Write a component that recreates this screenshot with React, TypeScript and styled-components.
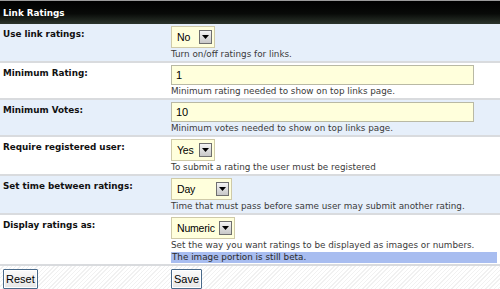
import React from "react";
import styled, { createGlobalStyle } from "styled-components";

const GlobalStyle = createGlobalStyle`
    html, body {
        margin: 0;
        padding: 0;
        background: #ffffff;
    }
    body {
        width: 500px;
        font-family: "DejaVu Sans", Verdana, sans-serif;
    }
`;

type Field = {
    label: string;
    kind: "select" | "text";
    value: string;
    width?: number;
    help: string;
    note?: string;
};

const fields: Field[] = [
    { label: "Use link ratings:", kind: "select", value: "No", width: 44, help: "Turn on/off ratings for links." },
    { label: "Minimum Rating:", kind: "text", value: "1", help: "Minimum rating needed to show on top links page." },
    { label: "Minimum Votes:", kind: "text", value: "10", help: "Minimum votes needed to show on top links page." },
    { label: "Require registered user:", kind: "select", value: "Yes", width: 44, help: "To submit a rating the user must be registered" },
    { label: "Set time between ratings:", kind: "select", value: "Day", width: 61, help: "Time that must pass before same user may submit another rating." },
    {
        label: "Display ratings as:",
        kind: "select",
        value: "Numeric",
        width: 64,
        help: "Set the way you want ratings to be displayed as images or numbers.",
        note: "The image portion is still beta.",
    },
];

const App = () => {
    return (
        <>
            <GlobalStyle />
            <Panel>
                <Header>Link Ratings</Header>
                {fields.map((f, i) => (
                    <Row key={f.label} $alt={i % 2 === 0}>
                        <LabelCell>{f.label}</LabelCell>
                        <ValueCell>
                            {f.kind === "select" ? (
                                <SelectBox $width={f.width || 44}>
                                    <SelectText>{f.value}</SelectText>
                                    <ArrowButton>
                                        <svg width="7" height="4" viewBox="0 0 7 4">
                                            <polygon points="0,0 7,0 3.5,4" fill="#000" />
                                        </svg>
                                    </ArrowButton>
                                </SelectBox>
                            ) : (
                                <TextBox>{f.value}</TextBox>
                            )}
                            <Help>{f.help}</Help>
                            {f.note && <Note>{f.note}</Note>}
                        </ValueCell>
                    </Row>
                ))}
                <ButtonRow>
                    <ButtonCell $wide={false}>
                        <Button>Reset</Button>
                    </ButtonCell>
                    <ButtonCell $wide>
                        <Button>Save</Button>
                    </ButtonCell>
                </ButtonRow>
            </Panel>
        </>
    );
};

const Panel = styled.div`
    width: 500px;
    height: 289px;
    overflow: hidden;
    background: #ffffff;
`;

const Header = styled.div`
    height: 23px;
    border-top: 1px solid #9a9a9a;
    padding-left: 3px;
    display: flex;
    align-items: center;
    color: #ffffff;
    font-size: 8.8px;
    font-weight: bold;
    background: linear-gradient(#000000 0%, #080a08 55%, #2c352c 100%);
`;

const Row = styled.div<{ $alt: boolean }>`
    display: flex;
    background: ${({ $alt }) => ($alt ? "#e6effa" : "#ffffff")};
    border-bottom: 2px solid #d9dbde;
`;

const LabelCell = styled.div`
    width: 168px;
    flex-shrink: 0;
    padding: 4px 0 0 3px;
    box-sizing: border-box;
    font-size: 8.8px;
    font-weight: bold;
    color: #111111;
    line-height: 12px;
`;

const ValueCell = styled.div`
    flex: 1;
    padding: 2px 3px 1px 3px;
    display: flex;
    flex-direction: column;
    align-items: flex-start;
`;

const SelectBox = styled.div<{ $width: number }>`
    width: ${({ $width }) => $width}px;
    height: 22px;
    box-sizing: border-box;
    display: flex;
    align-items: center;
    justify-content: space-between;
    padding: 0 2px 0 5px;
    background: #ffffdc;
    border: 1px solid #cfcaa8;
`;

const SelectText = styled.span`
    font-family: "Liberation Sans", Arial, sans-serif;
    font-size: 10.5px;
    color: #000000;
    letter-spacing: -0.2px;
`;

const ArrowButton = styled.span`
    width: 13px;
    height: 14px;
    flex-shrink: 0;
    box-sizing: border-box;
    display: flex;
    align-items: center;
    justify-content: center;
    border: 1px solid #6f6f6f;
    background: linear-gradient(#f4f4f4, #c8c8c8);
`;

const TextBox = styled.div`
    width: 303px;
    height: 20px;
    box-sizing: border-box;
    display: flex;
    align-items: center;
    padding-left: 4px;
    background: #ffffdc;
    border: 1px solid #b9b9a4;
    font-family: "Liberation Sans", Arial, sans-serif;
    font-size: 11px;
    color: #000000;
`;

const Help = styled.div`
    font-size: 8.8px;
    line-height: 11px;
    margin-top: 1px;
    color: #3a3a3a;
    white-space: nowrap;
`;

const Note = styled.div`
    align-self: stretch;
    margin-top: 1px;
    height: 11px;
    line-height: 11px;
    padding-left: 1px;
    font-size: 8.8px;
    color: #2a2a2a;
    background: #a8bdf0;
`;

const ButtonRow = styled.div`
    display: flex;
    height: 22px;
    padding-top: 2px;
    border-bottom: 2px solid #dcdcdc;
    background: repeating-linear-gradient(135deg, #ffffff 0px, #ffffff 2px, #f1f1f1 2px, #f1f1f1 3px);
`;

const ButtonCell = styled.div<{ $wide: boolean }>`
    ${({ $wide }) => ($wide ? "flex: 1;" : "width: 168px; flex-shrink: 0;")}
    padding-left: 3px;
    box-sizing: border-box;
`;

const Button = styled.button`
    height: 20px;
    padding: 0 2px;
    box-sizing: border-box;
    border: 1px solid #4a6a8a;
    border-radius: 1px;
    background: linear-gradient(#fbfbfb, #e6e6e6);
    font-family: "Liberation Sans", Arial, sans-serif;
    font-size: 11px;
    color: #000000;
    box-shadow: inset 0 0 0 1px #ffffff;
`;

export default App;
